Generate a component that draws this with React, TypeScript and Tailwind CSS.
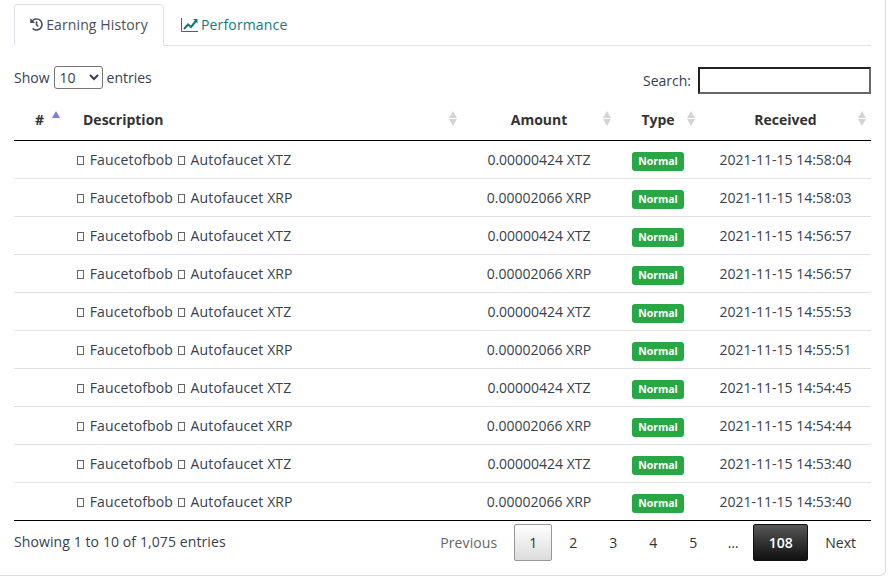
import { FaHistory } from "react-icons/fa";

const rows = [
  ["XTZ", "0.00000424", "2021-11-15 14:58:04"],
  ["XRP", "0.00002066", "2021-11-15 14:58:03"],
  ["XTZ", "0.00000424", "2021-11-15 14:56:57"],
  ["XRP", "0.00002066", "2021-11-15 14:56:57"],
  ["XTZ", "0.00000424", "2021-11-15 14:55:53"],
  ["XRP", "0.00002066", "2021-11-15 14:55:51"],
  ["XTZ", "0.00000424", "2021-11-15 14:54:45"],
  ["XRP", "0.00002066", "2021-11-15 14:54:44"],
  ["XTZ", "0.00000424", "2021-11-15 14:53:40"],
  ["XRP", "0.00002066", "2021-11-15 14:53:40"],
];

function Sort() {
  return (
    <span className="absolute right-[5px] top-[11px] flex flex-col gap-[1px]">
      <span className="w-0 h-0 border-x-[4px] border-x-transparent border-b-[7px] border-b-[#d4d4d4]" />
      <span className="w-0 h-0 border-x-[4px] border-x-transparent border-t-[7px] border-t-[#d4d4d4]" />
    </span>
  );
}

function Tofu() {
  return <span className="inline-block w-[7px] h-[9px] border border-[#666] ml-[1px] mr-[2px] align-baseline" />;
}

function ChartIcon() {
  return (
    <svg width="17" height="14" viewBox="0 0 17 14" fill="none" stroke="currentColor">
      <path d="M0.5 0V13.5H17" strokeWidth="1" />
      <path d="M3 11L7 6.5L10 9L15 3" strokeWidth="2" />
      <path d="M12 1H16.5V5.5Z" fill="currentColor" stroke="none" />
    </svg>
  );
}

export default function App() {
  return (
    <div className="w-[888px] h-[576px] bg-white overflow-hidden text-[14px] text-[#36414e]" style={{ fontFamily: '"Open Sans", sans-serif' }}>
      <div className="h-[576px] w-[886px] border-r border-b border-[#dedede] rounded-br-[6px] pl-[14px] pr-[14px] pt-[4px]">
        <div className="flex h-[42px] border-b border-[#dee2e6]">
          <div className="h-[42px] w-[150px] pb-[2px] flex items-center justify-center gap-[3px] border border-[#dee2e6] border-b-white bg-white rounded-t-[4px] text-[#495057] tracking-[0.12px]">
            <FaHistory className="w-[13px] h-[13px]" />
            <span>Earning History</span>
          </div>
          <div className="h-[41px] ml-[17px] flex items-center gap-[3px] text-[#0f7c7c] tracking-[0.15px]">
            <ChartIcon />
            <span>Performance</span>
          </div>
        </div>

        <div className="flex justify-between mt-[17px] h-[32px]">
          <div className="flex items-center gap-[4px] h-[28px]">
            <span>Show</span>
            <select className="w-[49px] h-[23px] border border-[#767676] rounded-[3px] bg-white text-[14px] text-[#36414e] pl-[1px]">
              <option>10</option>
            </select>
            <span>entries</span>
          </div>
          <div className="flex items-start gap-[7px] mt-[4px]">
            <span className="mt-[3px]">Search:</span>
            <div className="w-[173px] h-[27px] border-2 border-t-[#222] border-l-[#222] border-r-[#666] border-b-[#666]" />
          </div>
        </div>

        <table className="w-[857px] table-fixed border-collapse mt-[5px]">
          <colgroup>
            <col className="w-[53px]" />
            <col className="w-[395px]" />
            <col className="w-[154px]" />
            <col className="w-[84px]" />
            <col className="w-[171px]" />
          </colgroup>
          <thead>
            <tr className="h-[40px] border-b border-black font-bold text-[#333] text-center">
              <th className="relative pr-[2px]">#<span className="absolute left-[38px] top-[11px] w-0 h-0 border-x-[4px] border-x-transparent border-b-[7px] border-b-[#7c7cdc]" /></th>
              <th className="relative text-left pl-[16px]">Description<Sort /></th>
              <th className="relative">Amount<Sort /></th>
              <th className="relative">Type<Sort /></th>
              <th className="relative">Received<Sort /></th>
            </tr>
          </thead>
          <tbody>
            {rows.map((r, i) => (
              <tr key={i} className={`h-[38px] text-center ${i < 9 ? "border-b border-[#dee2e6]" : "border-b border-black"}`}>
                <td />
                <td className="text-left pl-[9px] tracking-[0.13px]">
                  <Tofu /> Faucetofbob <Tofu /> Autofaucet {r[0]}
                </td>
                <td>{r[1]} {r[0]}</td>
                <td className="pt-[2px]">
                  <span className="inline-block w-[52px] h-[19px] rounded-[3px] bg-[#28a745] text-white text-[10.5px] font-bold leading-[19px] align-middle">Normal</span>
                </td>
                <td>{r[2]}</td>
              </tr>
            ))}
          </tbody>
        </table>

        <div className="flex justify-between mt-[3px]">
          <div className="mt-[7px] tracking-[0.1px]">Showing 1 to 10 of 1,075 entries</div>
          <div className="flex items-center h-[37px] text-[#333]">
            <span className="mr-[17px] text-[#666] tracking-[0.1px]">Previous</span>
            <span className="w-[38px] h-[37px] mr-[1px] flex items-center justify-center border border-[#979797] rounded-[2px] bg-gradient-to-b from-white to-[#dcdcdc]">1</span>
            {["2", "3", "4", "5", "…"].map((p) => (
              <span key={p} className="w-[40px] text-center">{p}</span>
            ))}
            <span className="w-[55px] h-[37px] flex items-center justify-center rounded-[2px] border border-[#111] bg-gradient-to-b from-[#585858] to-[#111] text-white font-semibold">108</span>
            <span className="pl-[17px] pr-[15px] text-[#333]">Next</span>
          </div>
        </div>
      </div>
    </div>
  );
}
